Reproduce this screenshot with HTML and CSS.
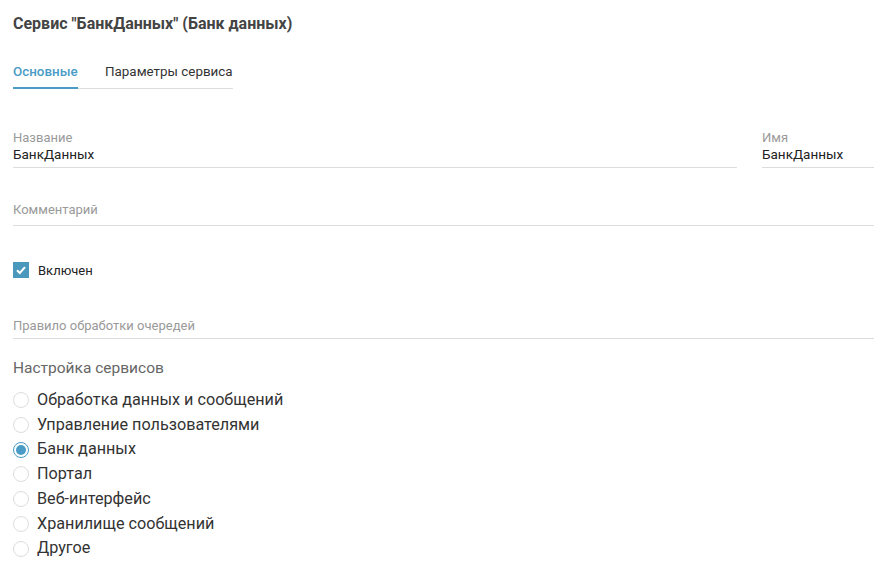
FILE: index.html
```html
<!DOCTYPE html>
<html lang="ru">

<head>
    <meta charset="UTF-8">
    <meta name="viewport" content="width=device-width, initial-scale=1.0">
    <title>Сервис</title>
    <link rel="stylesheet" href="styles.css">
</head>

<body>
    <main class="page">
        <h1 class="title">Сервис "БанкДанных" (Банк данных)</h1>

        <nav class="tabs">
            <a class="tab active">Основные</a>
            <a class="tab">Параметры сервиса</a>
        </nav>

        <div class="row">
            <div class="field grow">
                <label class="field-label">Название</label>
                <div class="field-value">БанкДанных</div>
            </div>
            <div class="field short">
                <label class="field-label">Имя</label>
                <div class="field-value">БанкДанных</div>
            </div>
        </div>

        <div class="field empty">
            <label class="field-label">Комментарий</label>
        </div>

        <label class="check">
            <span class="check-box">
                <svg width="12" height="12" viewBox="0 0 12 12"><path d="M2 6.2 L4.8 9 L10 3.2" fill="none" stroke="#fff" stroke-width="2"/></svg>
            </span>
            Включен
        </label>

        <div class="field empty rule">
            <label class="field-label">Правило обработки очередей</label>
        </div>

        <section class="services">
            <h2 class="section-title">Настройка сервисов</h2>
            <ul class="radio-list">
                <li class="radio"><span class="radio-dot"></span>Обработка данных и сообщений</li>
                <li class="radio"><span class="radio-dot"></span>Управление пользователями</li>
                <li class="radio selected"><span class="radio-dot"></span>Банк данных</li>
                <li class="radio"><span class="radio-dot"></span>Портал</li>
                <li class="radio"><span class="radio-dot"></span>Веб-интерфейс</li>
                <li class="radio"><span class="radio-dot"></span>Хранилище сообщений</li>
                <li class="radio"><span class="radio-dot"></span>Другое</li>
            </ul>
        </section>
    </main>
</body>

</html>
```

FILE: styles.css
```css
body {
    font-family: Roboto, 'Liberation Sans', sans-serif;
    margin: 0;
    padding: 0;
    background-color: #fff;
    color: #333;
}

.page {
    padding: 14px 0 0 13px;
}

.title {
    font-size: 16px;
    font-weight: bold;
    color: #444;
    margin: 0;
    line-height: 20px;
}

.tabs {
    display: flex;
    width: 220px;
    margin-top: 26px;
    border-bottom: 1px solid #ddd;
}

.tab {
    font-size: 13.4px;
    line-height: 16px;
    padding: 4px 0 8px;
    color: #333;
    margin-bottom: -1px;
}

.tab.active {
    color: #4a9cc6;
    font-weight: 500;
    width: 65px;
    margin-right: 27px;
    border-bottom: 2px solid #4a9cc6;
    padding-bottom: 7px;
}

.row {
    display: flex;
    gap: 25px;
    margin-top: 41px;
}

.field {
    border-bottom: 1px solid #ddd;
    padding-bottom: 3px;
}

.grow {
    flex: 1;
}

.short {
    width: 112px;
}

.field-label {
    display: block;
    font-size: 13px;
    line-height: 16px;
    color: #9a9a9a;
}

.row .field-label {
    margin-bottom: -2px;
}

.field-value {
    font-size: 13.5px;
    line-height: 20px;
    color: #222;
}

.field.empty {
    margin-top: 34px;
    padding-bottom: 7px;
}

.check {
    display: flex;
    align-items: center;
    gap: 9px;
    font-size: 13px;
    color: #222;
    margin-top: 36px;
}

.check-box {
    width: 16px;
    height: 16px;
    background-color: #4a98bc;
    display: flex;
    align-items: center;
    justify-content: center;
}

.field.rule {
    margin-top: 40px;
    padding-bottom: 4px;
}

.services {
    margin-top: 19px;
}

.section-title {
    font-size: 15.5px;
    font-weight: normal;
    color: #666;
    margin: 0 0 10px;
    line-height: 20px;
}

.radio-list {
    list-style: none;
    margin: 0;
    padding: 0;
}

.radio {
    display: flex;
    align-items: center;
    gap: 8px;
    font-size: 16.2px;
    line-height: 24.7px;
    color: #333;
}

.radio-dot {
    width: 14px;
    height: 14px;
    border: 1px solid #ddd;
    border-radius: 50%;
    box-sizing: content-box;
    position: relative;
}

.radio.selected .radio-dot {
    border-color: #4a9cc6;
}

.radio.selected .radio-dot::after {
    content: "";
    position: absolute;
    left: 2px;
    top: 2px;
    width: 10px;
    height: 10px;
    border-radius: 50%;
    background-color: #4a9cc6;
}
```
